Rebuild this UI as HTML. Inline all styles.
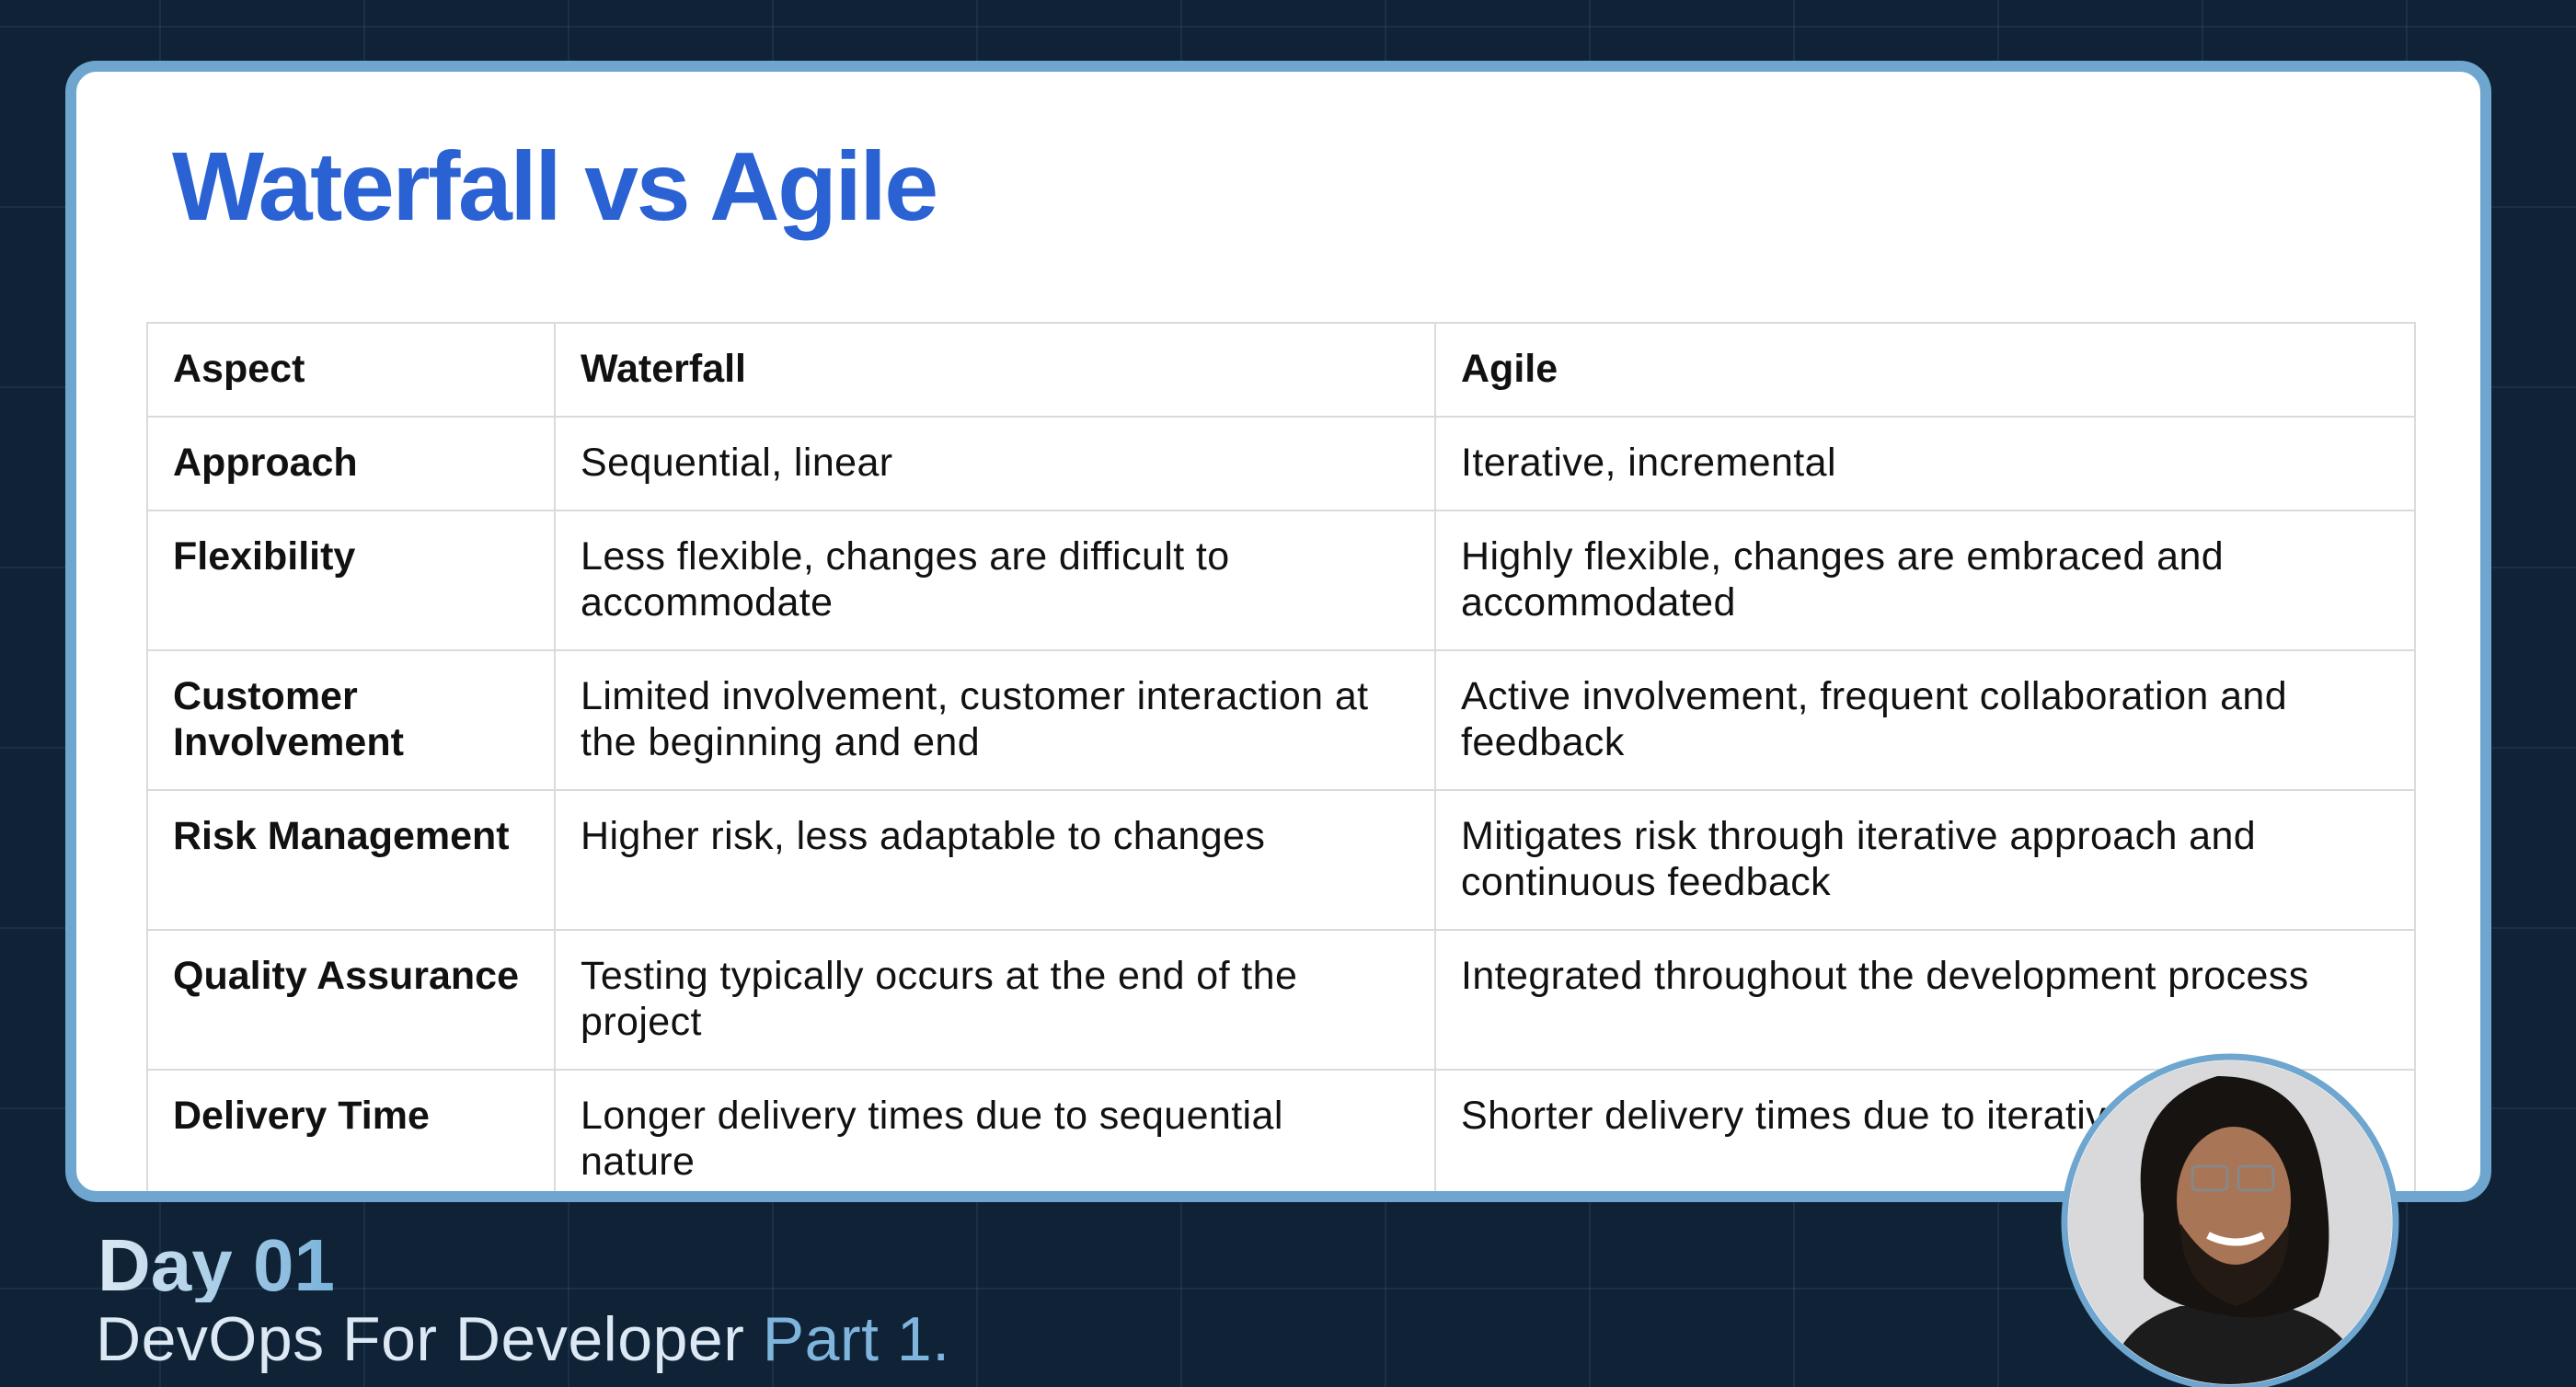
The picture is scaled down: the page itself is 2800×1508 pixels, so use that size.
<!DOCTYPE html>
<html><head><meta charset="utf-8"><style>
html,body{margin:0;padding:0}
body{width:2800px;height:1508px;overflow:hidden;position:relative;background:#0f2236;font-family:"Liberation Sans",sans-serif;
background-image:linear-gradient(90deg,rgba(60,110,150,.2) 2px,transparent 2px),linear-gradient(0deg,rgba(60,110,150,.2) 2px,transparent 2px);
background-size:222px 196px;background-position:173px 30px}
.card{position:absolute;left:71px;top:66px;width:2613px;height:1217px;border:12px solid #6ea6cf;border-radius:34px;background:#fff;overflow:hidden}
h1{position:absolute;left:104px;top:72px;margin:0;font-size:106px;line-height:1;font-weight:bold;color:#2a62d4;letter-spacing:-2.5px}
table{position:absolute;left:76px;top:272px;border-collapse:collapse;table-layout:fixed;width:2465px}
td{border:2px solid #dadada;vertical-align:top;padding:24px 27px 0;font-size:43px;line-height:50px;color:#111;white-space:nowrap;letter-spacing:.4px}
td.b{font-weight:bold;letter-spacing:0}
tr.s td{height:76px}
tr.t td{height:126px}
.day{position:absolute;left:106px;top:1336px;font-size:80px;font-weight:bold;line-height:1;background:linear-gradient(90deg,#dbe9f4,#7ab2da);-webkit-background-clip:text;background-clip:text;color:transparent}
.sub{position:absolute;left:104px;top:1422px;font-size:68px;line-height:1;color:#dce9f4;letter-spacing:.5px}
.sub span{color:#7fb5dd}
</style></head><body>
<div class="card">
<h1>Waterfall vs Agile</h1>
<table>
<colgroup><col style="width:443px"><col style="width:957px"><col style="width:1065px"></colgroup>
<tr class="s"><td class="b">Aspect</td><td class="b">Waterfall</td><td class="b">Agile</td></tr>
<tr class="s"><td class="b">Approach</td><td>Sequential, linear</td><td>Iterative, incremental</td></tr>
<tr class="t"><td class="b">Flexibility</td><td>Less flexible, changes are difficult to<br>accommodate</td><td>Highly flexible, changes are embraced and<br>accommodated</td></tr>
<tr class="t"><td class="b">Customer<br>Involvement</td><td>Limited involvement, customer interaction at<br>the beginning and end</td><td>Active involvement, frequent collaboration and<br>feedback</td></tr>
<tr class="t"><td class="b">Risk Management</td><td>Higher risk, less adaptable to changes</td><td>Mitigates risk through iterative approach and<br>continuous feedback</td></tr>
<tr class="t"><td class="b">Quality Assurance</td><td>Testing typically occurs at the end of the<br>project</td><td>Integrated throughout the development process</td></tr>
<tr class="t"><td class="b">Delivery Time</td><td>Longer delivery times due to sequential<br>nature</td><td>Shorter delivery times due to iterative approach</td></tr>
</table>
</div>
<div class="day">Day 01</div>
<div class="sub">DevOps For Developer <span>Part 1.</span></div>
<svg style="position:absolute;left:0;top:0" width="2800" height="1508">
<defs><clipPath id="c"><circle cx="2424" cy="1329" r="176"/></clipPath></defs>
<circle cx="2424" cy="1329" r="183" fill="#fff"/>
<g clip-path="url(#c)">
<rect x="2240" y="1140" width="380" height="380" fill="#d9d9db"/>
<path d="M2290 1508 Q2300 1440 2370 1420 L2480 1420 Q2560 1440 2570 1508 Z" fill="#1c1c1c"/>
<path d="M2330 1320 Q2310 1200 2410 1170 Q2510 1170 2525 1280 Q2540 1360 2520 1410 Q2470 1440 2420 1430 Q2350 1420 2330 1390 Z" fill="#171310"/>
<ellipse cx="2428" cy="1305" rx="62" ry="80" fill="#a87556"/>
<path d="M2370 1330 Q2430 1420 2488 1330 Q2490 1400 2430 1420 Q2370 1400 2370 1330Z" fill="#241a14"/>
<path d="M2400 1343 Q2430 1358 2460 1343" stroke="#fff" stroke-width="8" fill="none"/>
<rect x="2383" y="1268" width="38" height="26" rx="5" fill="none" stroke="#888" stroke-width="3"/>
<rect x="2433" y="1268" width="38" height="26" rx="5" fill="none" stroke="#888" stroke-width="3"/>
</g>
<circle cx="2424" cy="1329" r="180" fill="none" stroke="#6ea6cf" stroke-width="7"/>
</svg>
</body></html>
